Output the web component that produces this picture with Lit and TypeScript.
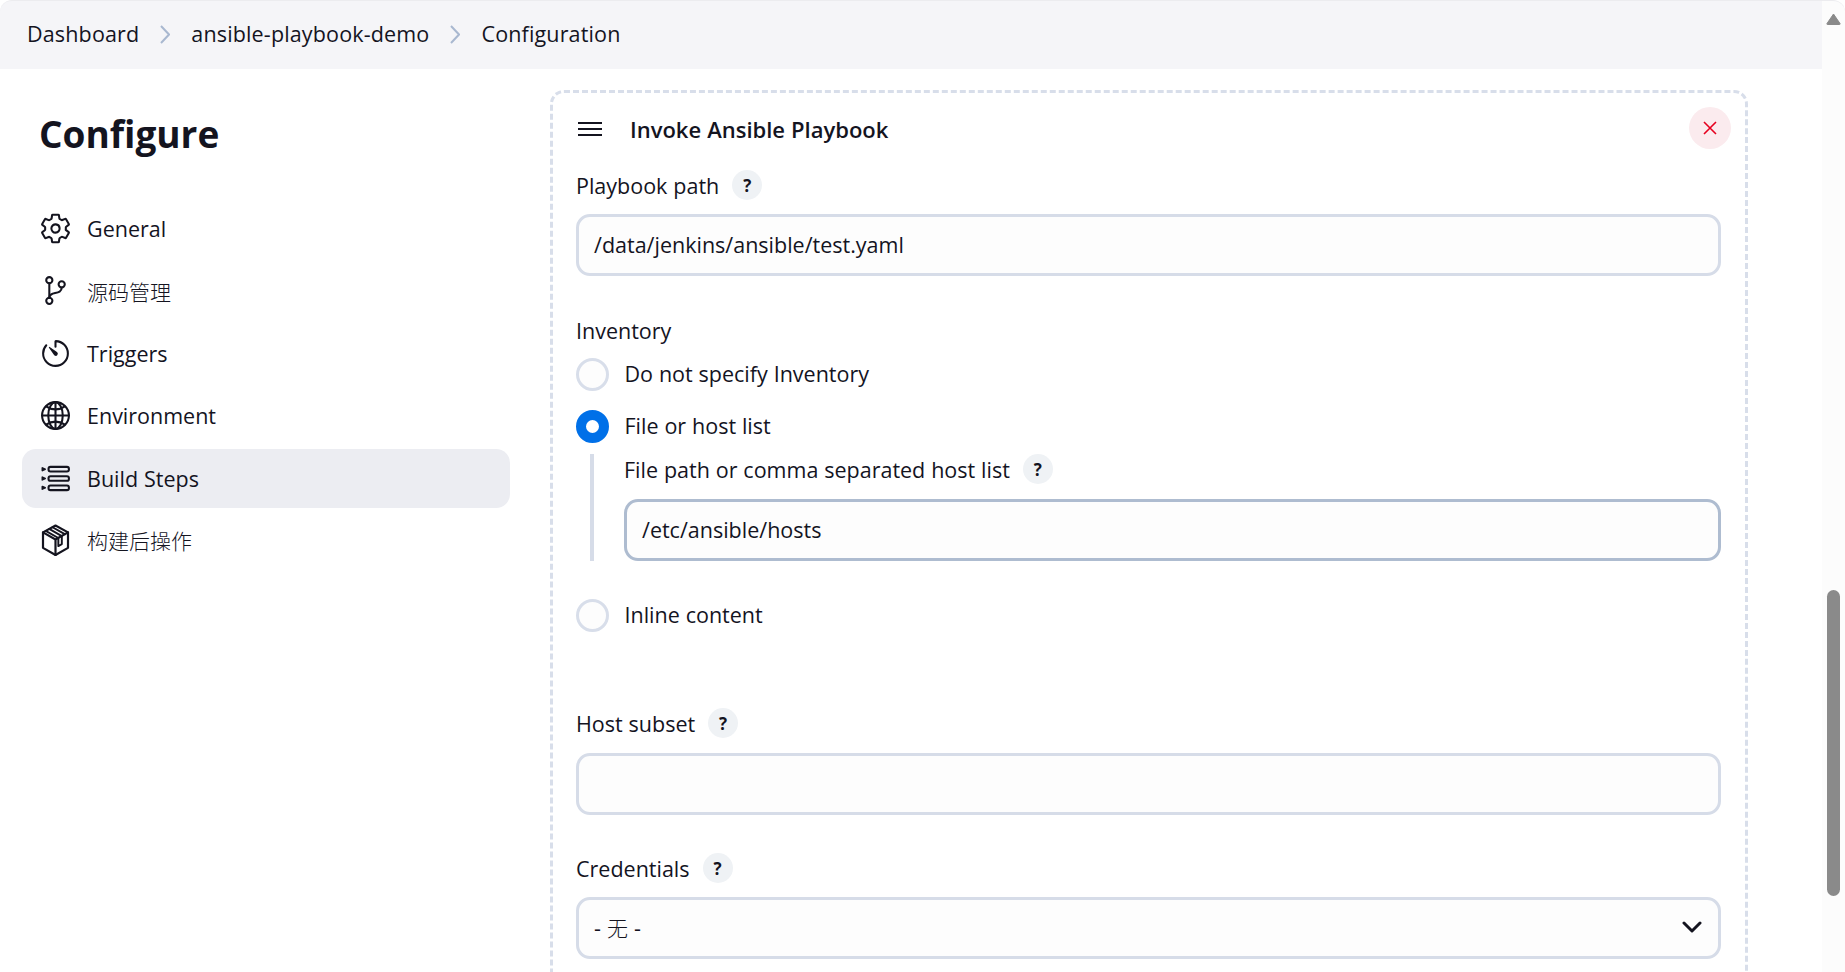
import { LitElement, html, css, svg } from "lit";
import { customElement } from "lit/decorators.js";

const ion = (body: unknown, cls = "ico") => html`<svg class=${cls} viewBox="0 0 512 512" fill="none" stroke="currentColor" stroke-width="32" stroke-linecap="round" stroke-linejoin="round">${body}</svg>`;

const icons: Record<string, unknown> = {
  general: ion(svg`<path d="M262.29 192.31a64 64 0 1057.4 57.4 64.13 64.13 0 00-57.4-57.4zM416.39 256a154.34 154.34 0 01-1.53 20.79l45.21 35.46a10.81 10.81 0 012.45 13.75l-42.77 74a10.81 10.81 0 01-13.14 4.59l-44.9-18.08a16.11 16.11 0 00-15.17 1.75A164.48 164.48 0 01325 400.8a15.94 15.94 0 00-8.82 12.14l-6.73 47.89a11.08 11.08 0 01-10.68 9.17h-85.54a11.11 11.11 0 01-10.69-8.87l-6.72-47.82a16.07 16.07 0 00-9-12.22 155.3 155.3 0 01-21.46-12.57 16 16 0 00-15.11-1.71l-44.89 18.07a10.81 10.81 0 01-13.14-4.58l-42.77-74a10.8 10.8 0 012.45-13.75l38.21-30a16.05 16.05 0 006-14.08c-.36-4.17-.58-8.33-.58-12.5s.21-8.27.58-12.35a16 16 0 00-6.07-13.94l-38.19-30A10.81 10.81 0 0149.48 186l42.77-74a10.81 10.81 0 0113.14-4.59l44.9 18.08a16.11 16.11 0 0015.17-1.75A164.48 164.48 0 01187 111.2a15.94 15.94 0 008.82-12.14l6.73-47.89A11.08 11.08 0 01213.23 42h85.54a11.11 11.11 0 0110.69 8.87l6.72 47.82a16.07 16.07 0 009 12.22 155.3 155.3 0 0121.46 12.57 16 16 0 0015.11 1.71l44.89-18.07a10.81 10.81 0 0113.14 4.58l42.77 74a10.8 10.8 0 01-2.45 13.75l-38.21 30a16.05 16.05 0 00-6.05 14.08c.33 4.14.55 8.3.55 12.47z"/>`),
  scm: ion(svg`<circle cx="160" cy="96" r="48"/><circle cx="160" cy="416" r="48"/><path d="M160 368V144"/><circle cx="352" cy="160" r="48"/><path d="M352 208c0 128-192 48-192 160"/>`),
  triggers: ion(svg`<path d="M112.91 128A191.85 191.85 0 0064 254c-1.18 106.35 85.65 193.8 192 194 106.2.2 192-85.83 192-192 0-104.54-83.55-189.61-187.5-192a4.36 4.36 0 00-4.5 4.37V152"/><path fill="currentColor" stroke="none" d="M233.38 278.63l-79-113a8.13 8.13 0 0111.32-11.32l113 79a32.5 32.5 0 01-37 53.34 33.21 33.21 0 01-8.32-8.02z"/>`),
  env: ion(svg`<path d="M256 48C141.13 48 48 141.13 48 256s93.13 208 208 208 208-93.13 208-208S370.87 48 256 48z"/><path d="M256 48c-58.07 0-112.67 93.31-112.67 208S197.93 464 256 464s112.67-93.31 112.67-208S314.07 48 256 48z"/><path d="M117.33 117.33c38.24 27.15 86.38 43.34 138.67 43.34s100.43-16.19 138.67-43.34M394.67 394.67c-38.24-27.15-86.38-43.34-138.67-43.34s-100.43 16.19-138.67 43.34"/><path d="M256 48v416M464 256H48"/>`),
  steps: ion(svg`<rect x="148" y="76" width="316" height="72" rx="30"/><rect x="148" y="220" width="316" height="72" rx="30"/><rect x="148" y="364" width="316" height="72" rx="30"/><path d="M52 92l44 20-44 20zM52 236l44 20-44 20zM52 380l44 20-44 20z" stroke-width="26"/>`),
  post: ion(svg`<path d="M256 24L62 130v240l194 110 194-110V130z" stroke-width="34"/><path d="M62 130l194 110 194-110M256 240v240" stroke-width="34"/><path d="M158 77l196 110v125l-54 30V217L104 107" stroke-width="30"/><path d="M210 50l190 108" stroke-width="30"/>`),
};

const nav = [
  ["general", "General"],
  ["scm", "源码管理"],
  ["triggers", "Triggers"],
  ["env", "Environment"],
  ["steps", "Build Steps"],
  ["post", "构建后操作"],
];

@customElement("app-root")
export class AppRoot extends LitElement {
  static styles = css`
    :host {
      display: flex;
      height: 972px;
      overflow: hidden;
      background: #fff;
      color: #14141f;
      font-family: "Open Sans", "Noto Sans CJK SC", sans-serif;
      font-size: 21.5px;
      word-spacing: 0.3px;
    }
    .cjk { font-family: "Noto Sans CJK SC", sans-serif; font-weight: 300; font-size: 21px; }
    .page { flex: 1; min-width: 0; display: flex; flex-direction: column; }
    .crumbs {
      height: 69px;
      flex: none;
      box-sizing: border-box;
      border-top: 1px solid #ececef;
      border-top-left-radius: 12px;
      background: #f5f5f8;
      display: flex;
      align-items: center;
      padding: 0 0 3px 27px;
      letter-spacing: 0.15px;
    }
    .sep { width: 10px; height: 19px; margin: 2px 21px 0; color: #a9b8d0; flex: none; }
    .body { flex: 1; min-height: 0; display: grid; grid-template-columns: 550px 1198px; }
    .side { padding: 0 0 0 22px; width: 488px; }
    h1 { margin: 37px 0 37px 17px; font-size: 37px; line-height: 56px; font-weight: 700; word-spacing: 0; }
    .nav { display: flex; flex-direction: column; gap: 3.4px; }
    .item { height: 59px; display: flex; align-items: center; gap: 15px; padding-left: 17px; border-radius: 14px; }
    .item.on { background: #ecedf2; }
    .ico { width: 33px; height: 33px; flex: none; }
    .card {
      margin-top: 21px;
      box-sizing: border-box;
      height: 900px;
      border: 3px dashed #d8deea;
      border-radius: 14px;
      padding: 0 24px 0 23px;
      overflow: hidden;
    }
    .head { height: 66px; margin-top: 3px; display: flex; align-items: center; }
    .burger { width: 24px; height: 14px; flex: none; margin: 0 28px 0 2px; }
    .head b { flex: 1; font-size: 22px; font-weight: 600; }
    .close {
      width: 42px; height: 42px; border-radius: 50%; background: #fbebee; color: #e6001f;
      display: flex; align-items: center; justify-content: center; margin-right: -10px; margin-top: -2px;
    }
    .close svg { width: 14px; height: 14px; }
    .lab { display: flex; align-items: center; height: 30px; gap: 13px; }
    .help {
      width: 30px; height: 30px; border-radius: 50%; background: #eff2f5; flex: none;
      display: flex; align-items: center; justify-content: center; font-size: 17px; font-weight: 700;
    }
    .input {
      box-sizing: border-box; height: 62px; margin-top: 14px; border: 3px solid #d6dce8; border-radius: 14px;
      background: #fdfdfd; display: flex; align-items: center; padding: 0 15px 2px;
    }
    .input.roomy { margin-top: 15px; }
    .input.focus { border-color: #aebcd0; }
    .input .chev { margin-left: auto; width: 20px; height: 13px; margin-right: 1px; }
    .radio { display: flex; align-items: center; gap: 15.5px; height: 33px; }
    .dot { box-sizing: border-box; width: 33px; height: 33px; border-radius: 50%; border: 3px solid #d8deea; background: #fdfdfd; flex: none; }
    .dot.on { border: 10px solid #0070e8; background: #fff; }
    .radio span { margin-top: -2px; }
    .sub { margin: 11px 0 0 14px; border-left: 4px solid #d6dce8; padding-left: 30px; }
    .scroll {
      width: 23px; flex: none; box-sizing: border-box; background: #fcfcfc;
      border-top: 1px solid #ececef; border-top-right-radius: 12px;
      display: flex; flex-direction: column; align-items: center;
    }
    .arrow { width: 15px; height: 12px; margin-top: 12px; flex: none; }
    .thumb { width: 13px; height: 306px; margin-top: 565px; border-radius: 7px; background: #8a8a8a; flex: none; }
  `;

  render() {
    const chev = html`<svg class="sep" viewBox="0 0 10 19" fill="none" stroke="currentColor" stroke-width="2"><path d="M1 1l8 8.5-8 8.5"/></svg>`;
    return html`
      <div class="page">
        <div class="crumbs">
          <span>Dashboard</span>${chev}<span>ansible-playbook-demo</span>${chev}<span>Configuration</span>
        </div>
        <div class="body">
          <aside class="side">
            <h1>Configure</h1>
            <div class="nav">
              ${nav.map(([k, t]) => html`<div class="item ${k === "steps" ? "on" : ""}">${icons[k]}<span class=${/[a-z]/i.test(t) ? "" : "cjk"}>${t}</span></div>`)}
            </div>
          </aside>
          <section class="card">
            <div class="head">
              <svg class="burger" viewBox="0 0 24 14" stroke="#14141f" stroke-width="2"><path d="M0 1h24M0 7h24M0 13h24"/></svg>
              <b>Invoke Ansible Playbook</b>
              <div class="close"><svg viewBox="0 0 14 14" fill="none" stroke="currentColor" stroke-width="1.6"><path d="M1 1l12 12M13 1L1 13"/></svg></div>
            </div>
            <div class="lab" style="margin-top:8px"><span>Playbook path</span><span class="help">?</span></div>
            <div class="input">/data/jenkins/ansible/test.yaml</div>
            <div class="lab" style="margin-top:39px"><span>Inventory</span></div>
            <div class="radio" style="margin-top:13px"><i class="dot"></i><span>Do not specify Inventory</span></div>
            <div class="radio" style="margin-top:19px"><i class="dot on"></i><span>File or host list</span></div>
            <div class="sub">
              <div class="lab"><span>File path or comma separated host list</span><span class="help">?</span></div>
              <div class="input focus roomy">/etc/ansible/hosts</div>
            </div>
            <div class="radio" style="margin-top:38px"><i class="dot"></i><span>Inline content</span></div>
            <div class="lab" style="margin-top:76px"><span>Host subset</span><span class="help">?</span></div>
            <div class="input roomy"></div>
            <div class="lab" style="margin-top:38px"><span>Credentials</span><span class="help">?</span></div>
            <div class="input">- <span class="cjk" style="margin:0 6px">无</span> -
              <svg class="chev" viewBox="0 0 20 13" fill="none" stroke="#14141f" stroke-width="3" stroke-linecap="round" stroke-linejoin="round"><path d="M2 2l8 8 8-8"/></svg>
            </div>
          </section>
        </div>
      </div>
      <div class="scroll">
        <svg class="arrow" viewBox="0 0 15 12"><path d="M7.5 1L14 10.5a.6.6 0 0 1-.5 1h-12a.6.6 0 0 1-.5-1z" fill="#8a8a8a" stroke="#8a8a8a" stroke-linejoin="round"/></svg>
        <div class="thumb"></div>
      </div>
    `;
  }
}
